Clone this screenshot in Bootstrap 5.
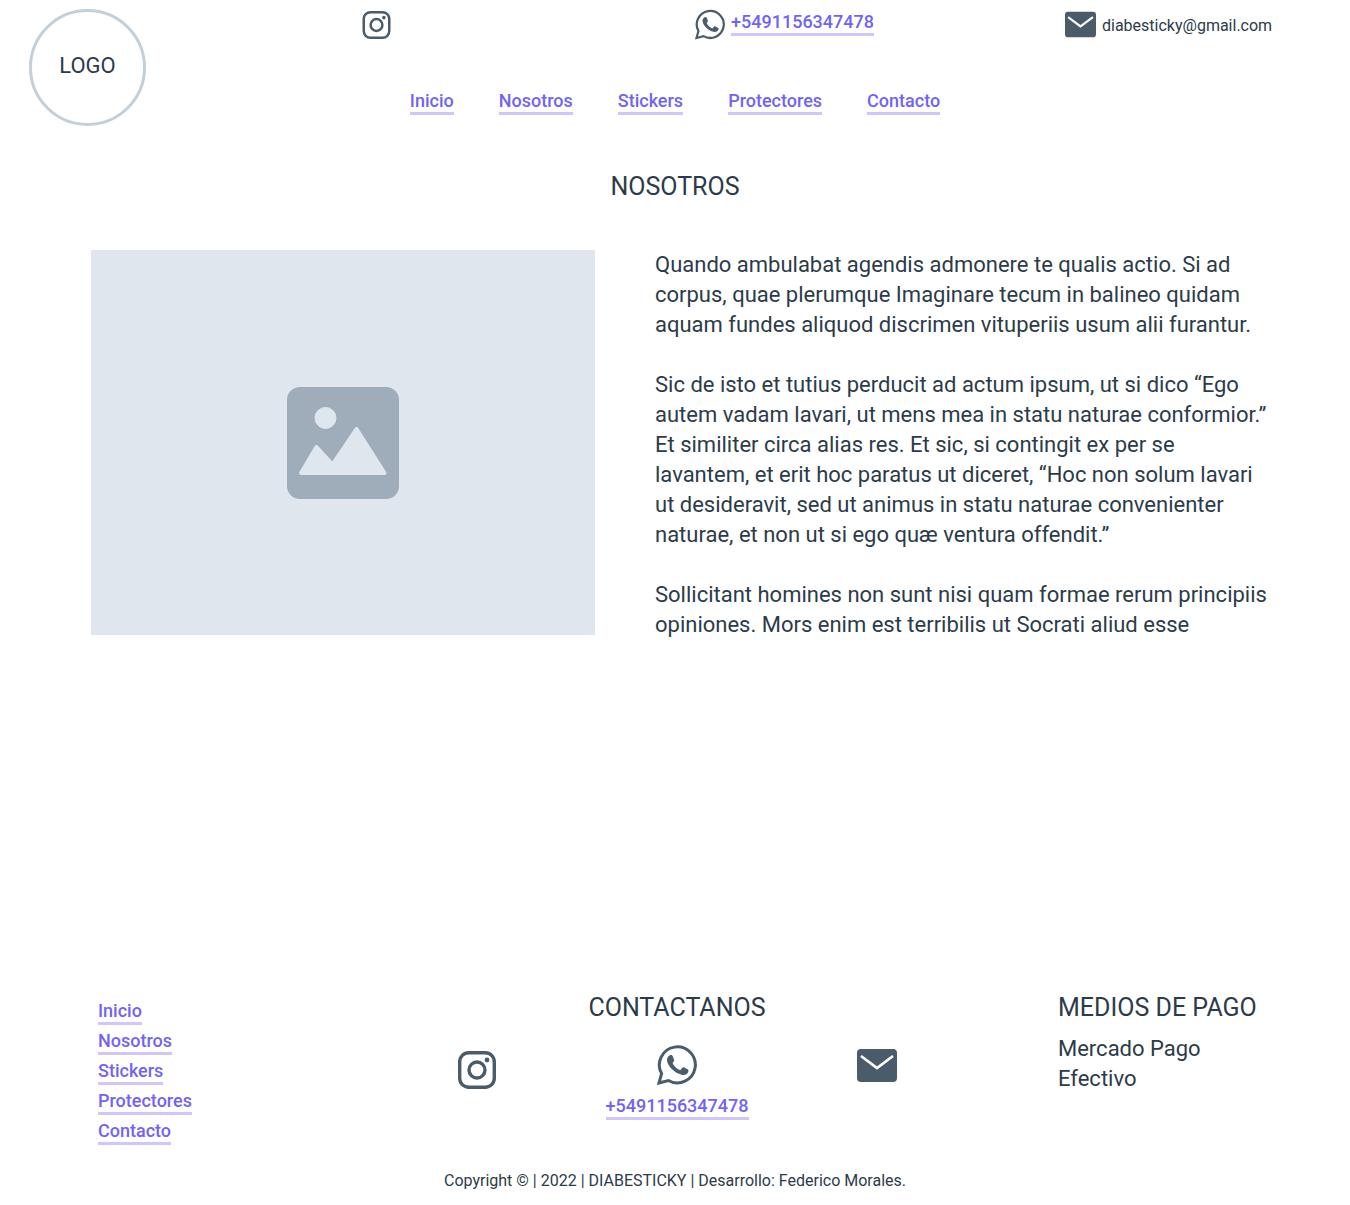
<!DOCTYPE html>
<html lang="es">
<head>
<meta charset="utf-8">
<meta name="viewport" content="width=device-width, initial-scale=1">
<title>Diabesticky - Nosotros</title>
<link href="https://cdn.jsdelivr.net/npm/bootstrap@5.3.0/dist/css/bootstrap.min.css" rel="stylesheet">
<style>
body{font-family:Roboto,"Liberation Sans",sans-serif;color:#2c3b49;font-size:22px;line-height:30px;background:#fff}
.site-head{display:grid;grid-template-columns:362fr 333fr 370fr 285fr;grid-template-rows:81px auto;padding-top:9px}
.brand-mark{grid-area:1/1/3/2;width:117px;height:117px;margin-left:29px;border:3px solid #c3cfd9;border-radius:50%;color:inherit;padding-bottom:4px}
.head-ig{grid-area:1/2;padding-top:2px}
.head-wa{grid-area:1/3;gap:6px}
.head-wa .ulink{margin-top:2px}
.head-mail{grid-area:1/4;gap:6px;padding-top:2px}
.site-nav{grid-area:2/1/3/-1;justify-self:center;gap:45px}
.ulink{display:inline-block;font-size:18px;font-weight:500;line-height:22px;color:#7163f6;text-decoration:none;border-bottom:3px solid #cfc6fd}
.ulink:hover{color:#4a3ce0}
.mail-text{font-size:16px;color:inherit}
.ico{display:block;color:#4a5c6a}
.page-title{font-size:25px;line-height:30px;font-weight:400;margin:0}
.about{display:grid;grid-template-columns:504fr 615fr;column-gap:60px;padding:0 80px 0 91px;margin-top:48px}
.photo{background:#dfe6ee;height:385px}
.photo svg{width:112px;height:112px}
.about-text p{margin-bottom:30px}
.site-main{padding-top:46px}
.site-foot{padding:0 0 9px 98px}
.foot-grid{display:grid;grid-template-columns:279fr 600fr 373fr}
.foot-links{padding-top:2px}
.foot-links li{height:30px}
.foot-icons{padding-top:22px}
.foot-icons .ulink{margin-top:10px}
.foot-ig{padding-top:6px}
.pay{padding-left:81px}
.pay ul{margin:11px 0 0}
.copy{font-size:16px;margin:21px 98px 0 0}
</style>
</head>
<body class="d-flex flex-column min-vh-100">
<svg class="d-none" aria-hidden="true">
  <symbol id="ig" viewBox="0 0 38 38"><g fill="none" stroke="currentColor"><rect x="1.7" y="1.7" width="34.6" height="34.6" rx="9" stroke-width="3.4"/><circle cx="19" cy="19" r="8" stroke-width="3.4"/></g><circle cx="29" cy="9" r="2.4" fill="currentColor"/></symbol>
  <symbol id="wa" viewBox="0 0 40 40"><path d="M2 38 4.6 28.6A18 18 0 1 1 11.400 35.500Z" fill="none" stroke="currentColor" stroke-width="3"/><path d="M12.500 10.500c1.600-.9 2.700-.5 3.300.9l1.200 3c.5 1.300-.1 2-1.500 3.600 1.500 3.200 4.200 5.800 7.700 7.200l1.900-2.200c.6-.7 1.300-.8 2.100-.4l3.400 1.700c.9.500 1.100 1.200.7 2.400-.9 2.500-3.600 3.800-6.600 3.100-7.300-1.700-13.500-8-14.600-13.700-.4-2.300.6-4.500 2.400-5.600z" fill="currentColor"/></symbol>
  <symbol id="ml" viewBox="0 0 40 33"><rect width="40" height="33" rx="4" fill="currentColor"/><path d="M4 7 20 19 36 7" fill="none" stroke="#fff" stroke-width="2.700"/></symbol>
</svg>

<header class="site-head">
  <a href="#" class="brand-mark d-flex align-items-center justify-content-center text-decoration-none">LOGO</a>
  <a href="#" class="head-ig align-self-start" aria-label="Instagram"><svg class="ico" width="29" height="28"><use href="#ig"/></svg></a>
  <div class="head-wa d-flex align-items-start">
    <svg class="ico" width="30" height="31"><use href="#wa"/></svg>
    <a href="tel:+5491156347478" class="ulink">+5491156347478</a>
  </div>
  <div class="head-mail d-flex align-items-start">
    <svg class="ico" width="31" height="27"><use href="#ml"/></svg>
    <a href="mailto:diabesticky@gmail.com" class="mail-text text-decoration-none">diabesticky@gmail.com</a>
  </div>
  <nav class="site-nav d-flex align-items-start" aria-label="Principal">
    <a class="ulink" href="#">Inicio</a><a class="ulink" href="#">Nosotros</a><a class="ulink" href="#">Stickers</a><a class="ulink" href="#">Protectores</a><a class="ulink" href="#">Contacto</a>
  </nav>
</header>

<main class="site-main">
  <h1 class="page-title text-center">NOSOTROS</h1>
  <section class="about">
    <div class="photo d-flex align-items-center justify-content-center">
      <svg viewBox="0 0 112 112" role="img" aria-label="Imagen"><rect width="112" height="112" rx="13" fill="#9eadb9"/><g fill="#dfe6ee" stroke="#dfe6ee"><circle cx="38.500" cy="31" r="10.500"/><path d="M14 86 29.500 60 45.500 77.500 69.500 42 97.500 86Z" stroke-width="4" stroke-linejoin="round"/></g></svg>
    </div>
    <div class="about-text">
      <p>Quando ambulabat agendis admonere te qualis actio. Si ad<br>corpus, quae plerumque Imaginare tecum in balineo quidam<br>aquam fundes aliquod discrimen vituperiis usum alii furantur.</p>
      <p>Sic de isto et tutius perducit ad actum ipsum, ut si dico “Ego<br>autem vadam lavari, ut mens mea in statu naturae conformior.”<br>Et similiter circa alias res. Et sic, si contingit ex per se<br>lavantem, et erit hoc paratus ut diceret, “Hoc non solum lavari<br>ut desideravit, sed ut animus in statu naturae convenienter<br>naturae, et non ut si ego quæ ventura offendit.”</p>
      <p class="mb-0">Sollicitant homines non sunt nisi quam formae rerum principiis<br>opiniones. Mors enim est terribilis ut Socrati aliud esse</p>
    </div>
  </section>
</main>

<footer class="site-foot mt-auto">
  <div class="foot-grid">
    <ul class="foot-links list-unstyled mb-0">
      <li><a class="ulink" href="#">Inicio</a></li><li><a class="ulink" href="#">Nosotros</a></li><li><a class="ulink" href="#">Stickers</a></li><li><a class="ulink" href="#">Protectores</a></li><li><a class="ulink" href="#">Contacto</a></li>
    </ul>
    <section>
      <h2 class="page-title text-center">CONTACTANOS</h2>
      <div class="foot-icons row g-0">
        <div class="foot-ig col-4 d-flex justify-content-center align-items-start"><a href="#" aria-label="Instagram"><svg class="ico" width="38" height="38"><use href="#ig"/></svg></a></div>
        <div class="col-4 d-flex flex-column align-items-center"><svg class="ico" width="40" height="40"><use href="#wa"/></svg><a href="tel:+5491156347478" class="ulink">+5491156347478</a></div>
        <div class="col-4 d-flex justify-content-center align-items-start pt-1"><a href="mailto:diabesticky@gmail.com" aria-label="Correo"><svg class="ico" width="40" height="33"><use href="#ml"/></svg></a></div>
      </div>
    </section>
    <section class="pay">
      <h2 class="page-title">MEDIOS DE PAGO</h2>
      <ul class="list-unstyled"><li>Mercado Pago</li><li>Efectivo</li></ul>
    </section>
  </div>
  <p class="copy text-center">Copyright © | 2022 | DIABESTICKY | Desarrollo: Federico Morales.</p>
</footer>
<script src="https://cdn.jsdelivr.net/npm/bootstrap@5.3.0/dist/js/bootstrap.bundle.min.js"></script>
</body>
</html>
